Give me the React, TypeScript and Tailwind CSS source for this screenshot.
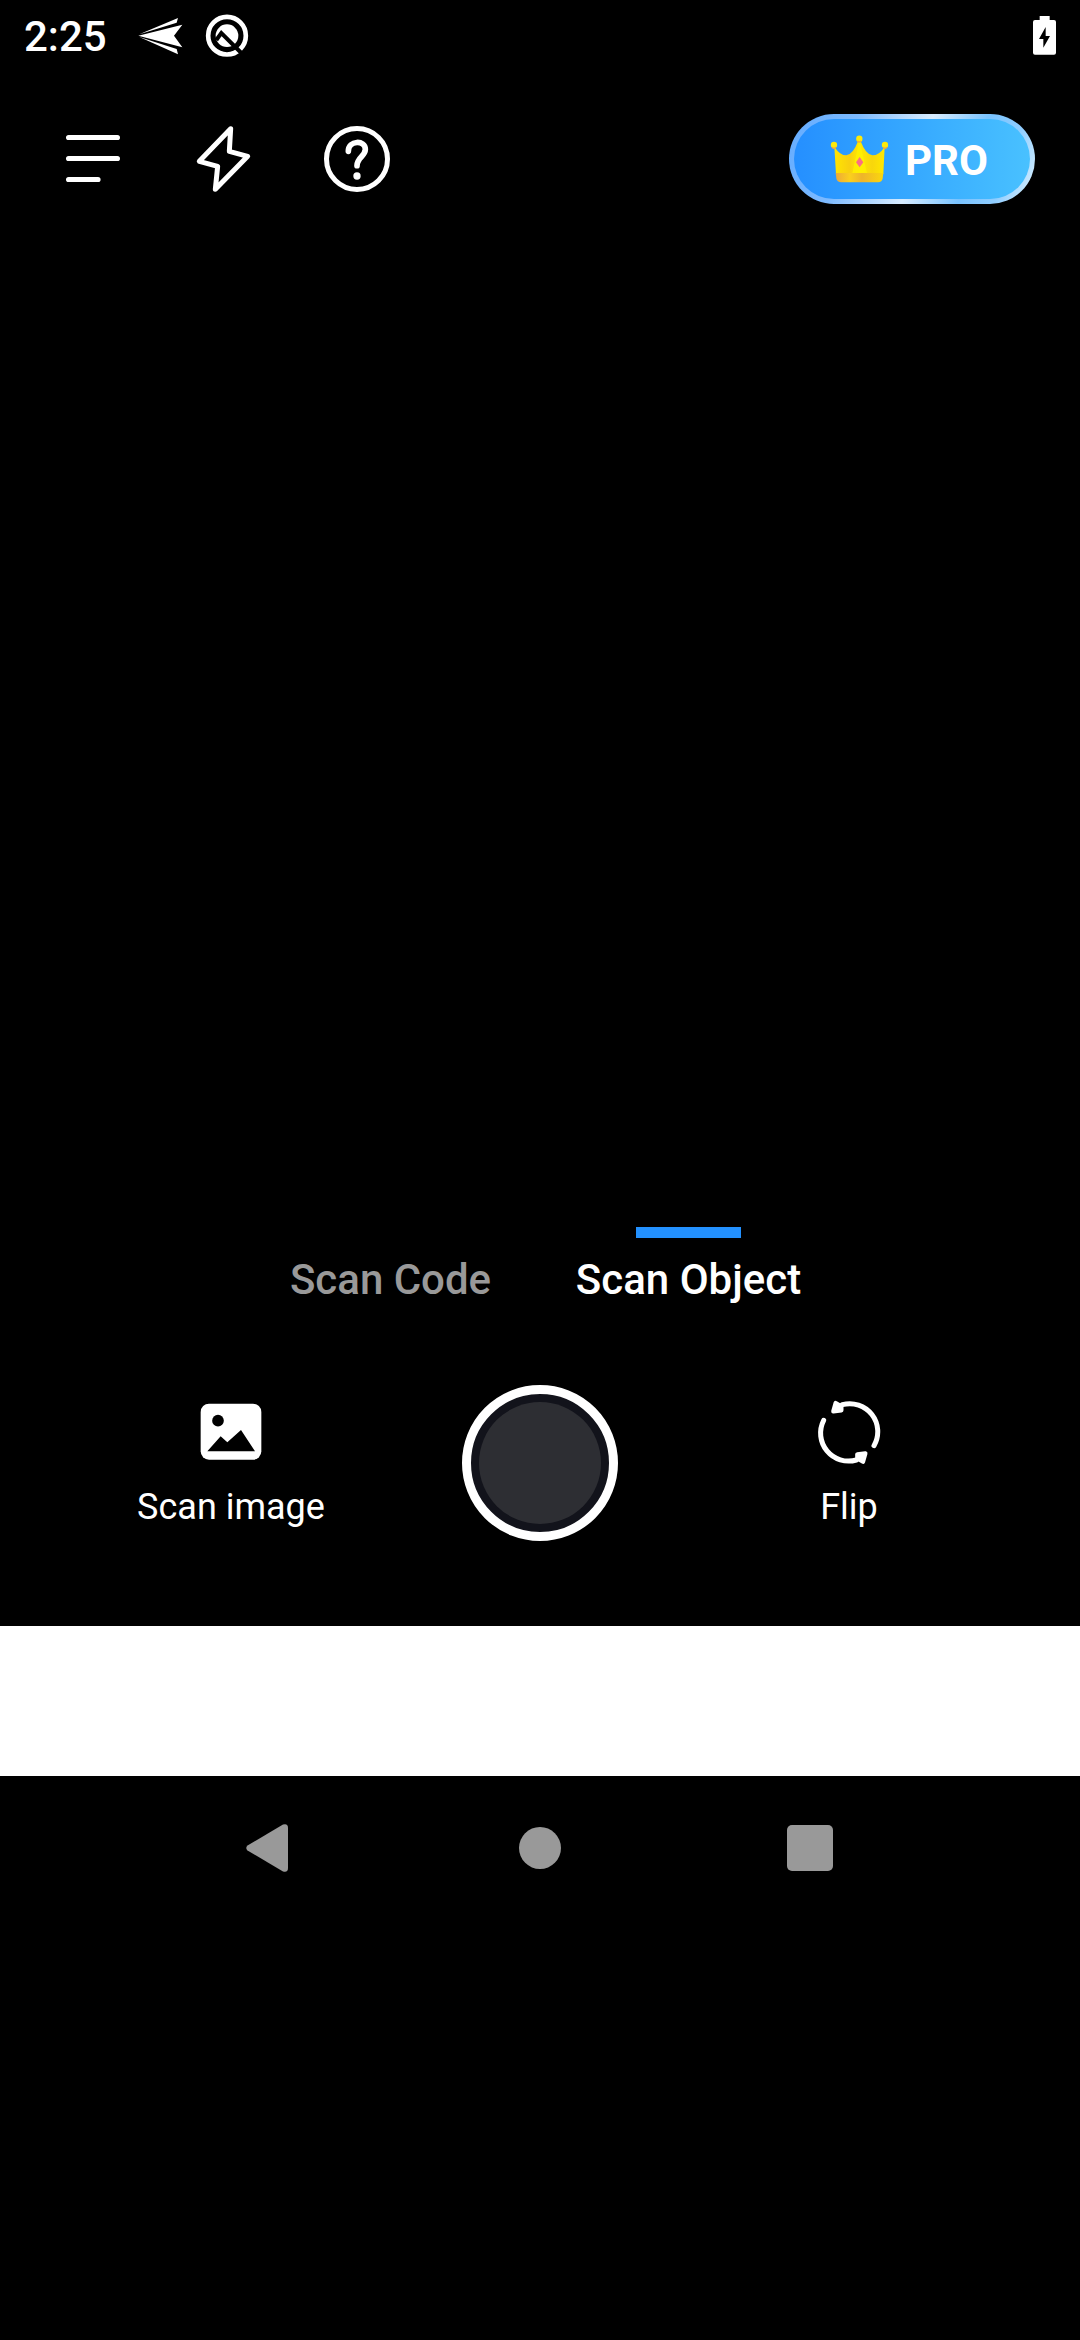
import React from "react";

const StatusBar = () => (
  <header className="flex h-[72px] shrink-0 items-start">
    <span className="ml-6 mt-[12px] w-[84px] text-[42px] font-medium leading-[50px]">2:25</span>
    <svg className="ml-[28px] mt-[15px]" width="52" height="42" viewBox="408 45 156 126" fill="#fff">
      <path d="M415 107L547 74L522 107L547 142Z" />
      <path d="M418 103L534 54L530 68Z" />
      <path d="M418 111L534 163L530 147Z" />
    </svg>
    <svg className="ml-[15px] mt-[12px]" width="48" height="48" viewBox="609 36 144 144" fill="none">
      <circle cx="681" cy="107" r="56.500" stroke="#fff" strokeWidth="14" />
      <circle cx="681" cy="107" r="34" fill="#fff" />
      <path d="M649 120L664 99L724 159" stroke="#000" strokeWidth="12" />
    </svg>
    <svg className="ml-auto mr-[23px] mt-[15px]" width="25" height="41" viewBox="96 45 75 123">
      <path d="M119 48h30v12h13q6 0 6 6v92q0 6-6 6h-57q-6 0-6-6V66q0-6 6-6h14z" fill="#fff" />
      <path d="M137 81L117 117H130V143L150 108H137Z" fill="#000" />
    </svg>
  </header>
);

const Crown = () => (
  <svg width="60" height="50" viewBox="180 104 180 150">
    <defs>
      <linearGradient id="crownBand" x1="0" x2="1">
        <stop offset="0" stopColor="#eda83a" />
        <stop offset=".3" stopColor="#fbd01c" />
        <stop offset=".55" stopColor="#eeb42b" />
        <stop offset="1" stopColor="#fbd70c" />
      </linearGradient>
      <linearGradient id="crownBody" x1="0" x2="1">
        <stop offset="0" stopColor="#ffe500" />
        <stop offset=".3" stopColor="#f8cf10" />
        <stop offset=".5" stopColor="#ffe900" />
        <stop offset=".75" stopColor="#f8d60c" />
        <stop offset="1" stopColor="#ffe800" />
      </linearGradient>
    </defs>
    <path d="M193 142Q210 168 229 168Q250 164 263 128L268 120L273 128Q287 165 307 168Q328 168 344 142L340 224H198Z" fill="url(#crownBody)" />
    <path d="M268 122L291 222H247Z" fill="#fff200" opacity=".75" />
    <path d="M197 221H340L338 237Q336 249 324 249H214Q201 249 199 237Z" fill="url(#crownBand)" />
    <circle cx="192" cy="137" r="9.500" fill="#fdea0c" />
    <circle cx="268" cy="118" r="9.500" fill="#fdea0c" />
    <circle cx="345" cy="137" r="9.500" fill="#fdea0c" />
    <path d="M186 144Q192 150 198 144" stroke="#f2a93b" strokeWidth="4" fill="none" />
    <path d="M262 125Q268 131 274 125" stroke="#f2a93b" strokeWidth="4" fill="none" />
    <path d="M339 144Q345 150 351 144" stroke="#f2a93b" strokeWidth="4" fill="none" />
    <path d="M269 173L280 189L269 204L258 189Z" fill="#fb6f85" />
  </svg>
);

const Toolbar = () => (
  <div className="flex h-[174px] shrink-0 items-center pr-[45px]">
    <svg className="ml-[64px]" width="58" height="54" viewBox="0 0 58 54" stroke="#fff" strokeWidth="5.200" strokeLinecap="round">
      <path d="M4.600 5.500H53.400M4.600 26.500H53.400M4.600 47.500H34" />
    </svg>
    <svg className="ml-[72px]" width="60" height="72" viewBox="462 69 180 216" fill="none" stroke="#fff" strokeWidth="15" strokeLinejoin="round">
      <path d="M572 86L478 184L533 199L526 268L623 169L568 154Z" />
    </svg>
    <svg className="ml-[67px]" width="72" height="72" viewBox="843 69 216 216" fill="none">
      <circle cx="951" cy="177" r="91.500" stroke="#fff" strokeWidth="15" />
      <path d="M925 154C925 120 976 119 976 148C976 169 951 172 951 197" stroke="#fff" strokeWidth="17" strokeLinecap="round" />
      <circle cx="951" cy="228" r="11" fill="#fff" />
    </svg>
    <div className="ml-auto h-[90px] w-[246px] rounded-full bg-[linear-gradient(110deg,#62abff_0%,#7dbaff_25%,#d8ecff_52%,#79c3ff_72%,#8fcdff_85%,#e0f4ff_100%)] p-[5px]">
      <div className="flex h-full items-center rounded-full bg-linear-to-r from-[#258fff] to-[#49c1ff] pl-[36px]">
        <Crown />
        <span className="ml-[15px] pt-[3px] text-[42px] font-bold leading-[48px]">PRO</span>
      </div>
    </div>
  </div>
);

const Tabs = () => (
  <div className="flex h-[96px] shrink-0 pl-[290px] text-[42px] font-medium leading-[50px]">
    <div className="flex w-[201px] flex-col items-center whitespace-nowrap pt-[28px] text-[#999]">Scan Code</div>
    <div className="ml-[85px] flex w-[225px] flex-col items-center whitespace-nowrap">
      <div className="h-[11px] w-[105px] shrink-0 bg-[#2391ff]" />
      <span className="mt-[17px]">Scan Object</span>
    </div>
  </div>
);

const Controls = () => (
  <div className="flex h-[303px] shrink-0 items-start pt-[62px] text-[36px] leading-[44px]">
    <div className="ml-[77px] flex w-[308px] flex-col items-center pt-[18px]">
      <svg width="62" height="58" viewBox="239 69 186 174">
        <rect x="241" y="71" width="182" height="168" rx="25" fill="#fff" />
        <circle cx="293" cy="122" r="17.500" fill="#000" />
        <path d="M261 214L301 169L321 187L362 150L404 214Z" fill="#000" />
      </svg>
      <span className="mt-[24px]">Scan image</span>
    </div>
    <div className="ml-[77px] flex size-[156px] items-center justify-center rounded-full border-[9px] border-white bg-[#12131b]">
      <div className="size-[122px] rounded-full bg-[#2d2e33]" />
    </div>
    <div className="ml-[77px] flex w-[308px] flex-col items-center pt-[15px]">
      <svg width="66" height="67" viewBox="108 60 198 201" fill="none" stroke="#fff" strokeWidth="15" strokeLinecap="round" strokeLinejoin="round">
        <path d="M187 74A84 84 0 0 1 282 197" />
        <path d="M131 121A84 84 0 0 0 229 240" />
        <path d="M167 69L160 94L184 91L184 79Z" fill="#fff" strokeWidth="13" />
        <path d="M249 245L256 220L232 223L232 235Z" fill="#fff" strokeWidth="13" />
      </svg>
      <span className="mt-[18px]">Flip</span>
    </div>
  </div>
);

const NavigationBar = () => (
  <nav className="flex h-[144px] shrink-0 items-center">
    <svg className="ml-[246px]" width="42" height="48" viewBox="0 0 42 48" fill="#999">
      <path d="M1.500 21.500L37 .6Q42-.8 42 4V44Q42 48.800 37 47.400L1.500 26.500Q-1 24 1.500 21.500Z" />
    </svg>
    <div className="ml-[231px] size-[42px] rounded-full bg-[#999]" />
    <div className="ml-[226px] size-[46px] rounded-[5px] bg-[#999]" />
  </nav>
);

export default function App() {
  return (
    <div className="flex h-[2340px] w-[1080px] flex-col overflow-hidden bg-black font-['Roboto',sans-serif] text-white">
      <StatusBar />
      <Toolbar />
      <main className="h-[981px] shrink-0" />
      <Tabs />
      <Controls />
      <div className="h-[150px] shrink-0 bg-white" />
      <NavigationBar />
    </div>
  );
}
